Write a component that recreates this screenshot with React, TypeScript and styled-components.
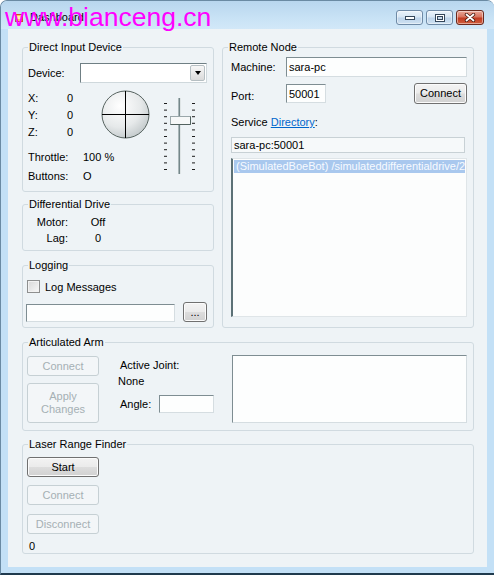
import React from 'react';
import styled, { createGlobalStyle } from 'styled-components';

const GlobalStyle = createGlobalStyle`
  html, body {
    margin: 0;
    padding: 0;
  }
  body {
    font-family: 'Liberation Sans', Arial, sans-serif;
    font-size: 11px;
    color: #000;
  }
  * {
    box-sizing: border-box;
  }
`;

const Window = styled.div`
  position: relative;
  width: 494px;
  height: 575px;
  display: flex;
  flex-direction: column;
  background: #c3e0f6;
  border-left: 1px solid #6a8aa3;
  border-top: 1px solid #6a8aa3;
  border-bottom: 2px solid #1f3a4d;
  border-radius: 7px 7px 0 0;
  overflow: hidden;
`;

const TitleBar = styled.div`
  height: 28px;
  flex-shrink: 0;
  display: flex;
  align-items: flex-start;
  padding: 9px 10px 0 14px;
  background: linear-gradient(180deg, #b8d6ee 0%, #c8e2f5 60%, #d2e8f8 100%);
`;

const TitleIcon = styled.div`
  margin-top: 2px;
  width: 8px;
  height: 8px;
`;

const TitleText = styled.span`
  margin-left: 7px;
  line-height: 14px;
  font-size: 11px;
  color: #000;
`;

const CaptionGroup = styled.div`
  margin-left: auto;
  display: flex;
  gap: 3px;
`;

const CaptionButton = styled.div<{ $w: number; $close?: boolean }>`
  width: ${({ $w }) => $w}px;
  height: 15px;
  display: flex;
  align-items: center;
  justify-content: center;
  border-radius: 3px;
  border: 1px solid ${({ $close }) => ($close ? '#6b2a1e' : '#6e8aa6')};
  background: ${({ $close }) =>
    $close
      ? 'linear-gradient(180deg, #eaa898 0%, #d8745f 45%, #c23b22 55%, #d0603f 100%)'
      : 'linear-gradient(180deg, #eaf2fa 0%, #d6e6f4 45%, #bcd3ea 55%, #cfe2f2 100%)'};
  box-shadow: inset 0 0 0 1px rgba(255, 255, 255, 0.45);
`;

const Watermark = styled.div`
  position: absolute;
  left: 4px;
  top: 3px;
  font-family: 'Liberation Sans', Arial, sans-serif;
  font-size: 26.5px;
  line-height: 26.5px;
  color: #ff00ff;
  white-space: nowrap;
  pointer-events: none;
`;

const Client = styled.div`
  flex: 1;
  margin: 0 7px 6px 7px;
  padding: 11px 0 0 14px;
  background: #eef3f6;
`;

const TopGrid = styled.div`
  display: grid;
  grid-template-columns: 192px 252px;
  column-gap: 8px;
`;

const Column = styled.div`
  display: flex;
  flex-direction: column;
`;

const GroupBox = styled.fieldset<{ $h: number; $w?: number; $mt?: number }>`
  margin: ${({ $mt }) => $mt ?? 0}px 0 0 0;
  padding: 0;
  min-width: 0;
  width: ${({ $w }) => ($w ? `${$w}px` : 'auto')};
  height: ${({ $h }) => $h}px;
  border: 1px solid #d0dae0;
  border-radius: 3px;
`;

const Legend = styled.legend`
  margin-left: 5px;
  padding: 0 1px;
  font-size: 11px;
  line-height: 14px;
`;

const Inner = styled.div<{ $pl: number }>`
  padding-left: ${({ $pl }) => $pl}px;
`;

const Row = styled.div<{ $mt?: number; $h?: number; $align?: string }>`
  display: flex;
  align-items: ${({ $align }) => $align ?? 'center'};
  margin-top: ${({ $mt }) => $mt ?? 0}px;
  height: ${({ $h }) => ($h ? `${$h}px` : 'auto')};
`;

const Label = styled.span<{ $w?: number; $ml?: number; $pt?: number }>`
  display: inline-block;
  flex-shrink: 0;
  width: ${({ $w }) => ($w ? `${$w}px` : 'auto')};
  margin-left: ${({ $ml }) => $ml ?? 0}px;
  padding-top: ${({ $pt }) => $pt ?? 0}px;
  line-height: 14px;
  white-space: nowrap;
`;

const Combo = styled.div`
  width: 127px;
  height: 20px;
  display: flex;
  background: #fff;
  border: 1px solid;
  border-color: #6f7f84 #cfd8dc #cfd8dc #6f7f84;
`;

const ComboArrow = styled.div`
  margin: 1px 1px 1px auto;
  width: 15px;
  display: flex;
  align-items: center;
  justify-content: center;
  background: linear-gradient(180deg, #f7f7f7 0%, #e9e9e9 50%, #dadada 100%);
  border: 1px solid #b6bfc3;
  border-radius: 2px;

  &::after {
    content: '';
    border-left: 3.5px solid transparent;
    border-right: 3.5px solid transparent;
    border-top: 4px solid #000;
  }
`;

const AxesArea = styled.div`
  display: flex;
  align-items: flex-start;
`;

const Readouts = styled.div`
  width: 73px;
  flex-shrink: 0;
`;

const AxisGrid = styled.div`
  display: grid;
  grid-template-columns: 39px auto;
  grid-auto-rows: 17px;
  align-items: center;
  margin-top: 6px;
`;

const StatusGrid = styled.div`
  display: grid;
  grid-template-columns: 55px auto;
  grid-auto-rows: 19px;
  align-items: center;
  margin-top: 7px;
  white-space: nowrap;
`;

const Joystick = styled.svg`
  margin-top: 7px;
  flex-shrink: 0;
`;

const Slider = styled.svg`
  margin-top: 15px;
  margin-left: 14px;
  flex-shrink: 0;
`;

const DriveGrid = styled.div`
  display: grid;
  grid-template-columns: 45px 36px;
  column-gap: 12px;
  grid-auto-rows: 16px;
  align-items: center;
  margin-top: 3px;
`;

const DriveLabel = styled.span`
  justify-self: end;
`;

const DriveValue = styled.span`
  justify-self: center;
`;

const TextBox = styled.div<{ $w: number; $h: number; $ro?: boolean }>`
  width: ${({ $w }) => $w}px;
  height: ${({ $h }) => $h}px;
  flex-shrink: 0;
  display: flex;
  align-items: center;
  padding-left: 2px;
  overflow: hidden;
  white-space: nowrap;
  font-size: 11px;
  background: ${({ $ro }) => ($ro ? '#f6f9fa' : '#fdfefe')};
  border: 1px solid;
  border-color: ${({ $ro }) =>
    $ro ? '#c8d1d5' : '#7e8d92 #d5dde1 #d5dde1 #7e8d92'};
`;

const Button = styled.button<{ $w: number; $h: number; $mt?: number; $ml?: number }>`
  width: ${({ $w }) => $w}px;
  height: ${({ $h }) => $h}px;
  margin: ${({ $mt }) => $mt ?? 0}px 0 0 ${({ $ml }) => $ml ?? 0}px;
  padding: 0;
  flex-shrink: 0;
  font-family: 'Liberation Sans', Arial, sans-serif;
  font-size: 11px;
  line-height: 13px;
  color: #000;
  border-radius: 3px;
  border: 1px solid #707070;
  background: linear-gradient(180deg, #f3f3f3 0%, #ebebeb 49%, #dddddd 51%, #d1d1d1 100%);
  box-shadow: inset 0 0 0 1px #fbfbfb;

  &:disabled {
    color: #a5b0b4;
    border-color: #c6d0d4;
    background: #f3f6f8;
    box-shadow: none;
  }
`;

const Link = styled.a`
  color: #0066cc;
  text-decoration: underline;
`;

const ListBox = styled.div`
  width: 236px;
  height: 159px;
  margin-top: 5px;
  padding: 1px 1px 0 1px;
  overflow: hidden;
  background: #fcfdfd;
  border: 1px solid;
  border-color: #dfe5e8 #dfe5e8 #dfe5e8 #5c7176;
  border-left-width: 2px;
`;

const ListItem = styled.div<{ $selected?: boolean }>`
  height: 13px;
  line-height: 13px;
  padding-left: 2px;
  white-space: nowrap;
  overflow: hidden;
  background: ${({ $selected }) => ($selected ? '#a9c8ee' : 'transparent')};
  color: ${({ $selected }) => ($selected ? '#f7faff' : '#000')};
`;

const CheckBox = styled.span`
  width: 13px;
  height: 13px;
  flex-shrink: 0;
  border: 1px solid #8e8f8f;
  background: linear-gradient(135deg, #d8d8d8 0%, #f8f8f8 100%);
  box-shadow: inset 0 0 0 1px #f2f2f2;
`;

const ArmColumn = styled.div<{ $w?: number; $ml?: number }>`
  display: flex;
  flex-direction: column;
  width: ${({ $w }) => ($w ? `${$w}px` : 'auto')};
  margin-left: ${({ $ml }) => $ml ?? 0}px;
  flex-shrink: 0;
`;

const ArmBox = styled.div`
  width: 235px;
  height: 68px;
  margin: 6px 0 0 18px;
  background: #fdfefe;
  border: 1px solid;
  border-color: #7e8d92 #d5dde1 #d5dde1 #7e8d92;
`;

const Counter = styled.span`
  display: block;
  margin: 6px 0 0 2px;
  line-height: 12px;
  font-size: 11px;
`;

const App = () => (
  <>
    <GlobalStyle />
    <Window>
      <TitleBar>
        <TitleIcon>
          <svg width="8" height="8" viewBox="0 0 8 8">
            <rect x="0.5" y="0.5" width="7" height="7" fill="#f6d04a" stroke="#c0512b" />
            <rect x="2" y="2" width="3" height="3" fill="#fff3b0" />
          </svg>
        </TitleIcon>
        <TitleText>Dashboard</TitleText>
        <CaptionGroup>
          <CaptionButton $w={27}>
            <svg width="10" height="4" viewBox="0 0 10 4">
              <rect x="0.5" y="0.5" width="9" height="3" fill="#fff" stroke="#34465a" />
            </svg>
          </CaptionButton>
          <CaptionButton $w={27}>
            <svg width="10" height="8" viewBox="0 0 10 8">
              <rect x="0.5" y="0.5" width="9" height="7" fill="#fff" stroke="#34465a" />
              <rect x="2.5" y="2.5" width="5" height="3" fill="#c7d9eb" stroke="#34465a" />
            </svg>
          </CaptionButton>
          <CaptionButton $w={28} $close>
            <svg width="12" height="9" viewBox="0 0 12 9">
              <path d="M2.5 1.5 L9.5 7.5 M9.5 1.5 L2.5 7.5" stroke="#4a1a10" strokeWidth="3.4" strokeLinecap="round" />
              <path d="M2.5 1.5 L9.5 7.5 M9.5 1.5 L2.5 7.5" stroke="#fff" strokeWidth="1.8" strokeLinecap="round" />
            </svg>
          </CaptionButton>
        </CaptionGroup>
      </TitleBar>

      <Client>
        <TopGrid>
          <Column>
            <GroupBox $h={152}>
              <Legend>Direct Input Device</Legend>
              <Inner $pl={5}>
                <Row $mt={9} $h={20}>
                  <Label $w={52}>Device:</Label>
                  <Combo>
                    <ComboArrow />
                  </Combo>
                </Row>
                <AxesArea>
                  <Readouts>
                    <AxisGrid>
                      <span>X:</span>
                      <span>0</span>
                      <span>Y:</span>
                      <span>0</span>
                      <span>Z:</span>
                      <span>0</span>
                    </AxisGrid>
                    <StatusGrid>
                      <span>Throttle:</span>
                      <span>100 %</span>
                      <span>Buttons:</span>
                      <span>O</span>
                    </StatusGrid>
                  </Readouts>
                  <Joystick width="49" height="49" viewBox="0 0 49 49">
                    <defs>
                      <radialGradient id="joy" cx="38%" cy="32%" r="75%">
                        <stop offset="0" stopColor="#ffffff" />
                        <stop offset="0.6" stopColor="#e6e9ea" />
                        <stop offset="1" stopColor="#bfc6c8" />
                      </radialGradient>
                    </defs>
                    <circle cx="24.5" cy="24.5" r="23.5" fill="url(#joy)" stroke="#56625f" />
                    <line x1="24.5" y1="1" x2="24.5" y2="48" stroke="#000" />
                    <line x1="1" y1="24.5" x2="48" y2="24.5" stroke="#000" />
                  </Joystick>
                  <Slider width="32" height="76" viewBox="0 0 32 76">
                    <rect x="14" y="0" width="3" height="76" fill="#dfe5e6" />
                    <rect x="14.5" y="0" width="1.5" height="76" fill="#74878a" />
                    {Array.from({ length: 11 }, (_, i) => (
                      <g key={i}>
                        <rect x="0" y={5 + i * 6.6} width="3" height="1" fill="#1c1c1c" />
                        <rect x="28" y={5 + i * 6.6} width="3" height="1" fill="#1c1c1c" />
                      </g>
                    ))}
                    <rect x="6.5" y="18.5" width="20" height="8" fill="#f6f8f8" stroke="#9aa7aa" />
                    <path d="M6.5 26.5 H26.5 V18.5" fill="none" stroke="#52625f" />
                  </Slider>
                </AxesArea>
              </Inner>
            </GroupBox>

            <GroupBox $h={54} $mt={5}>
              <Legend>Differential Drive</Legend>
              <DriveGrid>
                <DriveLabel>Motor:</DriveLabel>
                <DriveValue>Off</DriveValue>
                <DriveLabel>Lag:</DriveLabel>
                <DriveValue>0</DriveValue>
              </DriveGrid>
            </GroupBox>

            <GroupBox $h={70} $mt={7}>
              <Legend>Logging</Legend>
              <Inner $pl={3}>
                <Row $mt={8} $h={13}>
                  <Label $w={1} />
                  <CheckBox />
                  <Label $ml={5}>Log Messages</Label>
                </Row>
                <Row $mt={8} $h={21} $align="flex-end">
                  <TextBox $w={149} $h={18} />
                  <Button $w={24} $h={20} $ml={8}>
                    ...
                  </Button>
                </Row>
              </Inner>
            </GroupBox>
          </Column>

          <GroupBox $h={288}>
            <Legend>Remote Node</Legend>
            <Inner $pl={8}>
              <Row $mt={3} $h={20}>
                <Label $w={55}>Machine:</Label>
                <TextBox $w={181} $h={20}>sara-pc</TextBox>
              </Row>
              <Row $mt={7} $h={21} $align="flex-start">
                <Label $w={55} $pt={5}>
                  Port:
                </Label>
                <TextBox $w={40} $h={19}>50001</TextBox>
                <Button $w={53} $h={21} $ml={88} $mt={-1}>
                  Connect
                </Button>
              </Row>
              <Row $mt={10} $h={14}>
                <Label>
                  Service <Link>Directory</Link>:
                </Label>
              </Row>
              <Row $mt={8}>
                <TextBox $w={234} $h={16} $ro>
                  sara-pc:50001
                </TextBox>
              </Row>
              <ListBox>
                <ListItem $selected>
                  (SimulatedBoeBot) /simulateddifferentialdrive/2886f2a1-7d0c-4b8e
                </ListItem>
              </ListBox>
            </Inner>
          </GroupBox>
        </TopGrid>

        <GroupBox $h={96} $w={452} $mt={7}>
          <Legend>Articulated Arm</Legend>
          <Inner $pl={4}>
            <Row $align="flex-start">
              <ArmColumn>
                <Button $w={72} $h={20} $mt={7} disabled>
                  Connect
                </Button>
                <Button $w={72} $h={40} $mt={7} disabled>
                  Apply
                  <br />
                  Changes
                </Button>
              </ArmColumn>
              <ArmColumn $w={96} $ml={19}>
                <Label $ml={2} style={{ marginTop: 9 }}>
                  Active Joint:
                </Label>
                <Label style={{ marginTop: 2 }}>None</Label>
                <Row $mt={7} $h={18}>
                  <Label $w={39} $ml={2}>
                    Angle:
                  </Label>
                  <TextBox $w={55} $h={18} />
                </Row>
              </ArmColumn>
              <ArmBox />
            </Row>
          </Inner>
        </GroupBox>

        <GroupBox $h={117} $w={452} $mt={6}>
          <Legend>Laser Range Finder</Legend>
          <Inner $pl={4}>
            <ArmColumn>
              <Button $w={72} $h={20} $mt={6}>
                Start
              </Button>
              <Button $w={72} $h={20} $mt={8} disabled>
                Connect
              </Button>
              <Button $w={72} $h={20} $mt={9} disabled>
                Disconnect
              </Button>
            </ArmColumn>
            <Counter>0</Counter>
          </Inner>
        </GroupBox>
      </Client>

      <Watermark>www.bianceng.cn</Watermark>
    </Window>
  </>
);

export default App;
